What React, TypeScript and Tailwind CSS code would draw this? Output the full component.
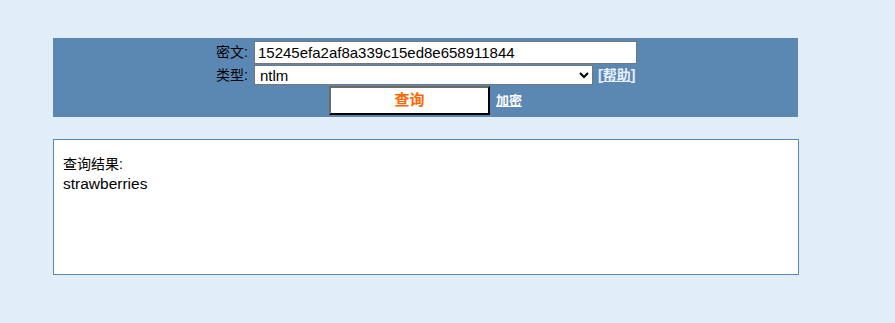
import { useState } from 'react';

export default function App() {
  const [hash, setHash] = useState('15245efa2af8a339c15ed8e658911844');
  const [type, setType] = useState('ntlm');

  return (
    <div className="min-h-[323px] bg-[#e1eef7] pt-[38px] font-['Liberation_Sans','Noto_Sans_CJK_SC',sans-serif] text-[14px] text-black">
      {/* Query form */}
      <div className="ml-[53px] w-[745px] h-[79px] bg-[#5b87b3] flex flex-col items-center pt-[3px]">
        <div className="flex items-center h-[22px]">
          <span className="w-[40px] text-right pr-[6px] leading-none">密文:</span>
          <input
            value={hash}
            onChange={(e) => setHash(e.target.value)}
            className="w-[383px] h-[23px] bg-white border border-[#767676] px-[3px] text-[15px] outline-none"
          />
        </div>
        <div className="flex items-center h-[21px] mt-[1px]">
          <span className="w-[40px] text-right pr-[6px] leading-none">类型:</span>
          <select
            value={type}
            onChange={(e) => setType(e.target.value)}
            className="w-[339px] h-[20px] bg-white border border-[#767676] text-[15px] pl-[1px] outline-none"
          >
            <option value="ntlm">ntlm</option>
            <option value="md5">md5</option>
            <option value="sha1">sha1</option>
          </select>
          <a href="#" className="ml-[5px] w-[39px] text-[#e8f1fa] font-bold underline leading-none text-[14px]">[帮助]</a>
        </div>
        <div className="flex items-center mt-[1px]">
          <button className="w-[161px] h-[29px] bg-white border-2 border-t-[#6b6b6b] border-l-[#6b6b6b] border-b-black border-r-black text-[#ff6600] font-bold text-[15px]">
            查询
          </button>
          <a href="#" className="ml-[6px] text-white font-semibold underline text-[13px]">加密</a>
        </div>
      </div>

      {/* Result */}
      <div className="ml-[53px] mt-[22px] w-[746px] h-[136px] bg-white border border-[#5b87b3] px-[9px] pt-[14px]">
        <div className="text-[14px] leading-[20px]">查询结果:</div>
        <div className="text-[15.5px] leading-[20px]">strawberries</div>
      </div>
    </div>
  );
}
